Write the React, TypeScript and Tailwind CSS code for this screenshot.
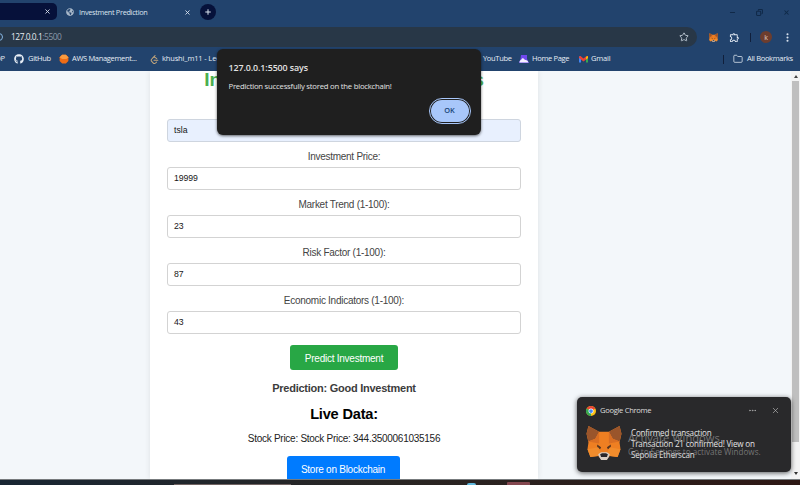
import React from "react";
import { X, Plus, Star, Minus, Copy, Folder, MoreHorizontal, EllipsisVertical } from "lucide-react";
import { FaGithub, FaGlobeAmericas } from "react-icons/fa";
import { SiLeetcode } from "react-icons/si";
import { MdOutlineExtension } from "react-icons/md";

const ui = "font-['Open_Sans','Noto_Sans',sans-serif]";

function FoxIcon({ className }: { className: string }) {
  return (
    <svg viewBox="0 0 36 35" className={className}>
      <path d="M2 0 13 6h10L34 0l2 8-2 9 1 7-3 8-8-1-3 3h-6l-3-3-8 1-3-8 1-7L0 8Z" fill="#ee7f22" />
      <path d="M2 0 13 6 9 13 2 16 0 8ZM34 0 23 6l4 7 7 3 2-8Z" fill="#9a552b" />
      <path d="m13 6-4 7-7 3 11 2ZM23 6l4 7 7 3-11 2Z" fill="#d96e23" />
      <path d="m11 19 4 3-1 2-3-2ZM25 19l-4 3 1 2 3-2Z" fill="#54331f" />
      <path d="m1 24 11-2 3 6-3 3-8 1ZM35 24l-11-2-3 6 3 3 8 1Z" fill="#f18c2c" />
      <path d="m12 29 3-2h6l3 2-1 3-2 3h-6l-2-3Z" fill="#d9cdc3" />
      <path d="m14 29 2-1h4l2 1-1 3h-6Z" fill="#29272b" />
    </svg>
  );
}

function ChromeIcon() {
  return (
    <svg viewBox="0 0 24 24" className="h-[10px] w-[10px] shrink-0">
      <circle cx="12" cy="12" r="12" fill="#fbc116" />
      <path d="M12 12 1.6 6A12 12 0 0 1 22.4 6Z" fill="#ea4335" />
      <path d="M12 12 1.6 6A12 12 0 0 0 12 24Z" fill="#34a853" />
      <circle cx="12" cy="12" r="6" fill="#fff" />
      <circle cx="12" cy="12" r="4.5" fill="#4285f4" />
    </svg>
  );
}

function TabStrip() {
  return (
    <div className="flex h-[27px] shrink-0 items-start text-[#dce5f0]">
      <div className="mt-[3px] flex h-[17px] w-[57px] items-center justify-end rounded-r-[5px] bg-[#06113a] pr-[6px]">
        <X size={7} strokeWidth={3} />
      </div>
      <div className="flex h-6 w-[142px] items-center pl-[9px]">
        <FaGlobeAmericas size={8} className="text-[#a9b9ca]" />
        <span className="ml-[5px] w-[105px] text-[7.3px] tracking-[-0.3px] whitespace-nowrap">Investment Prediction</span>
        <X size={7} strokeWidth={3} />
      </div>
      <div className="mt-1 ml-px flex h-4 w-4 items-center justify-center rounded-full bg-[#06113a]">
        <Plus size={8} strokeWidth={3} />
      </div>
      <div className="mr-[10px] ml-auto flex h-6 items-center gap-[20px] text-[#102948]">
        <Minus size={7} strokeWidth={3.5} />
        <Copy size={7} strokeWidth={3.5} className="-scale-x-100" />
        <X size={7} strokeWidth={3.5} />
      </div>
    </div>
  );
}

function AddressBar() {
  return (
    <div className="flex h-5 shrink-0 items-center">
      <div className="flex h-full w-[697px] items-center overflow-hidden rounded-r-[10px] bg-[#283747] pr-[8px]">
        <span className="-ml-[5px] h-[8px] w-[8px] rounded-full border border-[#86b6e3]" />
        <span className="ml-[8px] text-[8.4px] tracking-[-0.45px] whitespace-nowrap text-[#e6ebf1]">127.0.0.1<span className="text-[#8b98a7]">:5500</span></span>
        <Star size={10} className="ml-auto text-[#cdd7e2]" />
      </div>
      <FoxIcon className="ml-[12px] h-[9px] w-[9px]" />
      <MdOutlineExtension size={11} className="ml-[11px] text-[#e4ebf4]" />
      <div className="ml-[10px] h-[9px] w-px bg-[#101f3b]" />
      <div className="ml-[9px] flex h-[12px] w-[12px] items-center justify-center rounded-full bg-[#6d3d2e] text-[7px] leading-none text-[#e2d4cd]">k</div>
      <EllipsisVertical size={11} strokeWidth={2.5} className="ml-[10px] text-[#dce5f0]" />
    </div>
  );
}

function Bookmarks() {
  return (
    <div className="flex h-6 shrink-0 items-center text-[7.5px] tracking-[-0.32px] whitespace-nowrap text-[#e6edf5]">
      <span className="-ml-[5px] w-[19px]">OP</span>
      <FaGithub size={10} className="shrink-0" />
      <span className="ml-[4px] w-[31px]">GitHub</span>
      <svg viewBox="0 0 16 16" className="h-[10px] w-[10px] shrink-0"><path d="M5 1h6l4 4v6l-4 4H5l-4-4V5Z" fill="#ef6c15" /><path d="M5 1h6l4 4-3 3H5L1 5Z" fill="#f99a3f" /></svg>
      <span className="ml-[3px] w-[78px]">AWS Management...</span>
      <SiLeetcode size={9} className="shrink-0 text-[#c6a77b]" />
      <span className="ml-[3px] w-[321px] tracking-[-0.15px]">khushi_m11 - LeetCode</span>
      <span className="w-[36px]">YouTube</span>
      <svg viewBox="0 0 20 16" className="h-[8px] w-[10px] shrink-0"><path d="M4 0h12v8l4 8H0l3-8Z" fill="#7048ed" /><path d="M1 15c0-6 4-4 5-8 4-2 4 3 7 3 4-1 6 5 6 5Z" fill="#f4f0ff" /></svg>
      <span className="ml-[3px] w-[47px]">Home Page</span>
      <svg viewBox="0 0 18 14" className="h-[7px] w-[9px] shrink-0"><path d="M0 1h4v12H0Z" fill="#4285f4" /><path d="M14 1h4v12h-4Z" fill="#34a853" /><path d="m0 1 3-1 6 5 6-5 3 1v3l-9 7-9-7Z" fill="#ea4335" /><path d="m14 2 3-2 1 1v3l-4 3Z" fill="#fbbc04" /></svg>
      <span className="ml-[3px] tracking-[-0.2px]">Gmail</span>
      <div className="ml-auto h-[9px] w-px bg-[#101f3b]" />
      <Folder size={10} strokeWidth={1.8} className="ml-[9px]" />
      <span className="mr-[8px] ml-[4px] w-[45px]">All Bookmarks</span>
    </div>
  );
}

function Field({ label, value }: { label: string; value: string }) {
  return (
    <label className="flex h-12 shrink-0 flex-col">
      <span className="flex h-[25px] items-center justify-center pt-[3px] text-[10px] tracking-[-0.27px] text-[#444]">{label}</span>
      <span className="flex h-[23px] items-center rounded-[3px] border border-[#d3d3d3] bg-white pl-[6px] text-[8.7px] tracking-[-0.1px] text-[#161616]">{value}</span>
    </label>
  );
}

function InvestmentPage() {
  return (
    <main className="flex h-[408px] shrink-0 overflow-hidden bg-[#f3f7fa] font-['Liberation_Sans',Arial,sans-serif]">
      <section className="ml-[150px] flex h-full w-[388px] shrink-0 flex-col overflow-hidden bg-white px-[17px] shadow-[0_0_6px_rgba(0,0,0,0.09)]">
        <h1 className="-mt-[4px] h-[52px] shrink-0 text-center text-[19.2px] leading-[26px] font-bold tracking-[-0.15px] whitespace-nowrap text-[#4caf50]">Investment Prediction Analysis</h1>
        <div className="flex h-[23px] shrink-0 items-center rounded-[3px] border border-[#ced5df] bg-[#e8f0fe] pl-[6px] text-[8.7px] text-[#161616]">tsla</div>
        <Field label="Investment Price:" value="19999" />
        <Field label="Market Trend (1-100):" value="23" />
        <Field label="Risk Factor (1-100):" value="87" />
        <Field label="Economic Indicators (1-100):" value="43" />
        <button className="mt-[11px] h-[25px] w-[108px] shrink-0 self-center rounded-[3px] bg-[#28a745] pt-px text-[10px] tracking-[-0.25px] text-white">Predict Investment</button>
        <p className="mt-[10px] shrink-0 text-center text-[11px] leading-[16px] font-bold tracking-[-0.25px] text-[#3c3c3c]">Prediction: Good Investment</p>
        <h2 className="mt-[8px] shrink-0 text-center text-[14.6px] leading-[20px] font-bold tracking-[-0.2px] text-black">Live Data:</h2>
        <p className="mt-[8px] shrink-0 text-center text-[10px] leading-[14px] tracking-[-0.27px] text-[#222]">Stock Price: Stock Price: 344.3500061035156</p>
        <button className="mt-[10px] h-[25px] w-[113px] shrink-0 -translate-x-px self-center rounded-[3px] bg-[#007bff] pt-px text-[10px] tracking-[-0.25px] text-white">Store on Blockchain</button>
      </section>
      <div className="ml-auto flex h-full w-[9px] flex-col items-center bg-[#f3f3f3]">
        <div className="flex h-[10px] items-center"><div className="border-x-[2px] border-b-[3px] border-x-transparent border-b-[#444]" /></div>
        <div className="h-[361px] w-[7px] bg-[#bfbfbf]" />
        <div className="mt-auto mb-[4px] border-x-[2px] border-t-[3px] border-x-transparent border-t-[#333]" />
      </div>
    </main>
  );
}

function AlertDialog() {
  return (
    <div className="absolute top-[49px] left-[216.5px] flex h-[86px] w-[264px] flex-col rounded-[6px] bg-[#1f1f1f] px-[12px] pt-[12px] text-[#e3e3e3] shadow-[0_1px_3px_rgba(0,0,0,0.6)]">
      <div className="text-[8.9px] leading-[14px] font-semibold tracking-[-0.1px]">127.0.0.1:5500 says</div>
      <div className="mt-[5px] text-[7.7px] leading-[12px] tracking-[-0.21px]">Prediction successfully stored on the blockchain!</div>
      <button className="mt-[8px] flex h-[22px] w-[38px] shrink-0 items-center justify-center self-end rounded-full bg-[#a8c7fa] text-[7.4px] font-semibold text-[#174577] ring-1 ring-[#1f1f1f] outline-[1.5px] outline-offset-[1px] outline-[#a8c7fa] outline-solid">OK</button>
    </div>
  );
}

function Notification() {
  return (
    <div className="absolute top-[397px] left-[577px] flex h-[75px] w-[214px] flex-col rounded-[5px] bg-[#29292b] text-[#dedede] shadow-[0_1px_5px_rgba(0,0,0,0.65)]">
      <div className="flex h-[27px] shrink-0 items-center px-[9px]">
        <ChromeIcon />
        <span className="ml-[4px] text-[7.6px] tracking-[-0.32px]">Google Chrome</span>
        <MoreHorizontal size={9} className="ml-auto text-[#aaa]" />
        <X size={9} strokeWidth={1.7} className="mr-[2px] ml-[14px] text-[#bbb]" />
      </div>
      <div className="flex pl-[9px]">
        <FoxIcon className="mt-[2px] h-[34px] w-[36px] shrink-0" />
        <div className="ml-[9px] pt-[3px] text-[8.1px] leading-[11px] tracking-[-0.2px] whitespace-nowrap text-[#e5e5e5]">
          <div className="font-medium">Confirmed transaction</div>
          <div>Transaction 21 confirmed! View on</div>
          <div>Sepolia Etherscan</div>
        </div>
      </div>
      <div className="absolute top-[34px] left-[51px] whitespace-nowrap text-[#919191]/75">
        <div className="text-[11.2px] leading-[14px]">Activate Windows</div>
        <div className="text-[8.1px] leading-[13px]">Go to Settings to activate Windows.</div>
      </div>
    </div>
  );
}

export default function App() {
  return (
    <div className={`relative flex h-[485px] w-[800px] flex-col overflow-hidden bg-[#22436d] ${ui}`}>
      <TabStrip />
      <AddressBar />
      <Bookmarks />
      <InvestmentPage />
      <div className="flex h-[6px] shrink-0 items-end border-t border-[#777b7d] bg-linear-to-r from-[#182633] via-[#292523] to-[#2d1714]">
        <div className="ml-[174px] h-px w-[117px] bg-[#706362]" />
        <div className="ml-[176px] h-[2px] w-[9px] rounded-t-full bg-[#60b9dd]" />
        <div className="ml-[31px] h-[3px] w-[23px] rounded-t-[1px] bg-[#84474f]" />
      </div>
      <AlertDialog />
      <Notification />
    </div>
  );
}
